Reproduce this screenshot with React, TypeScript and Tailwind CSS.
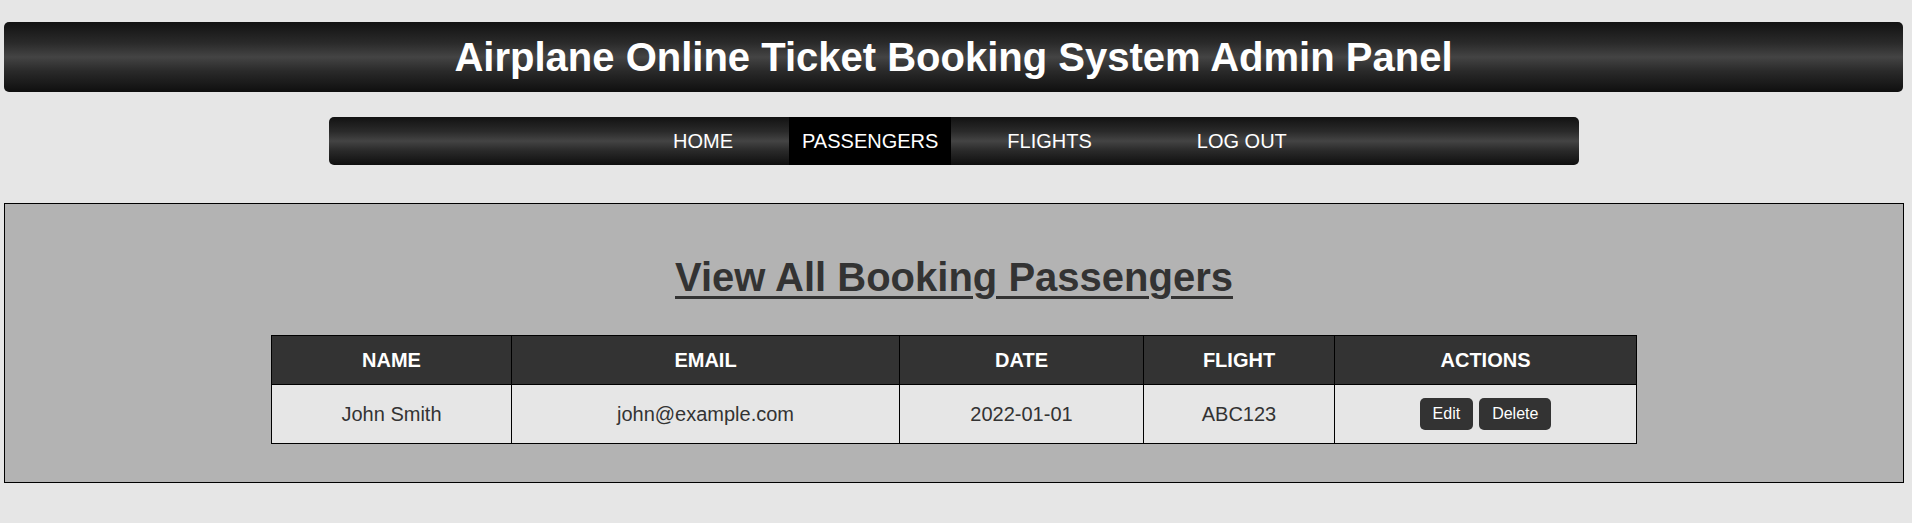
import React from "react";

const navItems = [
  { label: "HOME", active: false, extra: "" },
  { label: "PASSENGERS", active: true, extra: "" },
  { label: "FLIGHTS", active: false, extra: "" },
  { label: "LOG OUT", active: false, extra: "ml-[36px]" },
];

const columns = [
  { label: "NAME", width: "w-[240px]" },
  { label: "EMAIL", width: "w-[388px]" },
  { label: "DATE", width: "w-[244px]" },
  { label: "FLIGHT", width: "w-[191px]" },
  { label: "ACTIONS", width: "w-[302px]" },
];

const passengers = [
  { name: "John Smith", email: "john@example.com", date: "2022-01-01", flight: "ABC123" },
];

export default function App() {
  return (
    <div className="min-h-[523px] bg-[#e6e6e6] pt-[22px] font-['Liberation_Sans',Arial,sans-serif]">
      {/* Title bar */}
      <header className="ml-[4px] flex h-[70px] w-[1899px] items-center justify-center rounded-[5px] bg-[linear-gradient(to_bottom,#121212_0%,#2a2a2a_30%,#444444_50%,#2a2a2a_70%,#0f0f0f_100%)]">
        <h1 className="text-[40px] font-bold leading-none text-white">
          Airplane Online Ticket Booking System Admin Panel
        </h1>
      </header>

      {/* Navigation */}
      <nav className="ml-[329px] mt-[25px] flex h-[48px] w-[1250px] items-stretch gap-[43px] rounded-[5px] bg-[linear-gradient(to_bottom,#121212_0%,#2a2a2a_30%,#444444_50%,#2a2a2a_70%,#0f0f0f_100%)] pl-[331px]">
        {navItems.map(({ label, active, extra }) => (
          <a
            key={label}
            href="#"
            className={`flex items-center px-[13px] text-[20px] text-white ${extra} ${active ? "bg-black" : ""}`}
          >
            {label}
          </a>
        ))}
      </nav>

      {/* Content panel */}
      <main className="ml-[4px] mt-[38px] h-[280px] w-[1900px] border border-black bg-[#b3b3b3] pt-[50px]">
        <h2 className="text-center text-[40px] font-bold leading-[46px] text-[#333333] underline decoration-[3px] underline-offset-[5px]">
          View All Booking Passengers
        </h2>
        <table className="mx-auto mt-[35px] w-[1366px] border-collapse text-center text-[20px]">
          <thead>
            <tr className="h-[49px] bg-[#333333] text-white">
              {columns.map((c) => (
                <th key={c.label} className={`${c.width} border border-black p-0 font-bold`}>
                  {c.label}
                </th>
              ))}
            </tr>
          </thead>
          <tbody>
            {passengers.map((p) => (
              <tr key={p.email} className="h-[59px] bg-[#e6e6e6] text-[#333333]">
                <td className="border border-black p-0">{p.name}</td>
                <td className="border border-black p-0">{p.email}</td>
                <td className="border border-black p-0">{p.date}</td>
                <td className="border border-black p-0">{p.flight}</td>
                <td className="border border-black p-0">
                  <div className="flex items-center justify-center gap-[6px]">
                    <button className="h-[32px] rounded-[5px] bg-[#333333] px-[13px] text-[16px] text-white">
                      Edit
                    </button>
                    <button className="h-[32px] rounded-[5px] bg-[#333333] px-[13px] text-[16px] text-white">
                      Delete
                    </button>
                  </div>
                </td>
              </tr>
            ))}
          </tbody>
        </table>
      </main>
    </div>
  );
}
